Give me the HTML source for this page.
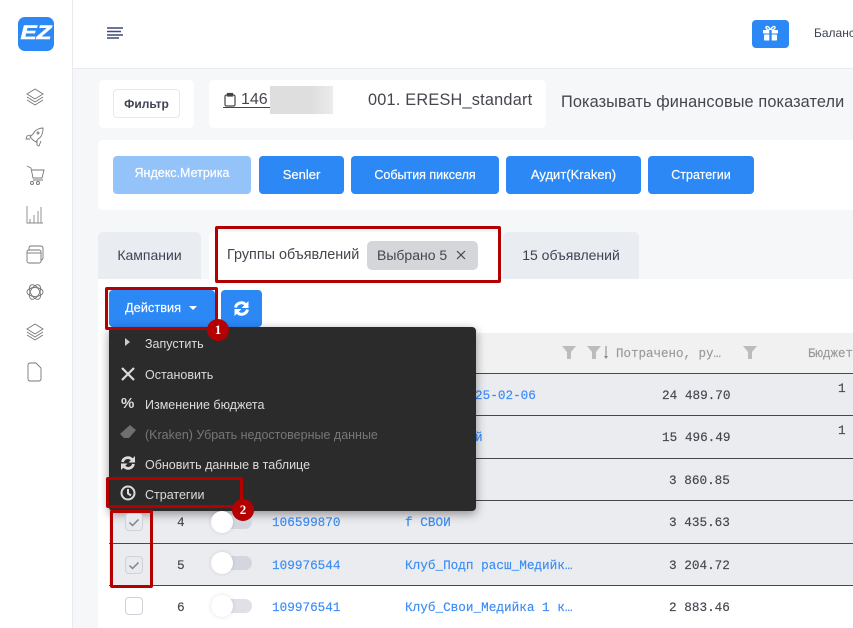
<!DOCTYPE html>
<html><head><meta charset="utf-8">
<style>
html,body{margin:0;padding:0;width:853px;height:628px;overflow:hidden;background:#f6f7f9}
body{position:relative;font-family:"Liberation Sans",sans-serif;color:#3f4254}
.a{position:absolute;box-sizing:border-box;white-space:nowrap}
.btn{position:absolute;box-sizing:border-box;background:#2b88f5;color:#fff;border-radius:4px;font-size:12.5px;text-align:center;top:156px;height:38px;line-height:38px;-webkit-text-stroke:.2px #fff}
.row{position:absolute;left:109px;width:744px;height:42px;background:#ebecf0;border-top:1px solid #46484c;box-sizing:border-box}
.m{position:absolute;font-family:"Liberation Mono",monospace;font-size:12.7px;white-space:nowrap;color:#44464e;-webkit-text-stroke:.15px currentColor}
.l{color:#3a8cf6}
.cb{position:absolute;left:125px;width:18px;height:18px;box-sizing:border-box;border:1px solid #cfd2da;border-radius:4px;background:#fff}
.cb.on{background:#e9eaee}
.tg{position:absolute;left:211px;width:41px;height:14px;background:#d3d6df;border-radius:7px}
.tg i{position:absolute;left:0;top:-4px;width:22px;height:22px;border-radius:50%;background:#fff;box-shadow:0 0 4px rgba(0,0,0,.12)}
.mi{position:absolute;left:145px;font-size:12.5px;color:#dcdcdc;white-space:nowrap}
.red{position:absolute;box-sizing:border-box;border:3px solid #b30000;border-radius:2px}
.num{position:absolute;width:22px;height:22px;border-radius:50%;background:#b30000;color:#fff;font:bold 13px/22px "Liberation Serif",serif;text-align:center}
svg{position:absolute;overflow:visible}
</style></head><body>

<!-- sidebar -->
<div class="a" style="left:0;top:0;width:73px;height:628px;background:#fff;border-right:1px solid #e8eaf0"></div>
<div class="a" style="left:18px;top:17px;width:36px;height:34px;background:#2b88f5;border-radius:7px"></div>
<div class="a" style="left:18px;top:17px;width:36px;height:34px;color:#fff;font:italic bold 19px/34px 'Liberation Sans',sans-serif;text-align:center;transform:scaleX(1.28);-webkit-text-stroke:.5px #fff">EZ</div>

<svg style="left:0;top:0" width="72" height="400" fill="none" stroke="#777" stroke-width=".9">
<path d="M35 89l8 5-8 5-8-5z"/><path d="M27 97l8 5 8-5M27 100l8 5 8-5"/>
<path d="M43 128c-4 0-8 2-10 6l-3 3 3 3 3 2 2-3c4-2 5-7 5-11z"/><path d="M31 135l-4 1-1 3 4 0M37 141l0 4 2 1 2-5"/><circle cx="38" cy="133" r="1"/>
<path d="M27 166l4 2 2 10h9l2-8H32M33 180h10"/><circle cx="32" cy="183" r="1.5"/><circle cx="38" cy="183" r="1.5"/>
<path d="M27 206v17h16M30 223v-4M34 223v-8M38 223v-12M41 223v-16" stroke="#888"/>
<rect x="27" y="250" width="14" height="13" rx="2"/><path d="M29 250v-2c0-1.500 1-2 2-2h10c1 0 2 1 2 2v10c0 1-1 2-2 2"/><path d="M27 253h14"/>
<g transform="translate(35 292)"><ellipse rx="8" ry="4.500"/><ellipse rx="8" ry="4.500" transform="rotate(60)"/><ellipse rx="8" ry="4.500" transform="rotate(120)"/></g>
<path d="M35 324l8 5-8 5-8-5z"/><path d="M27 332l8 5 8-5M27 335l8 5 8-5"/>
<path d="M30 363h6l5 5v11c0 1-1 2-2 2h-9c-1 0-2-1-2-2v-14c0-1 1-2 2-2z"/>
</svg>

<!-- header -->
<div class="a" style="left:73px;top:0;width:780px;height:69px;background:#fff;border-bottom:1px solid #e8eaf0"></div>
<svg style="left:107px;top:27px" width="16" height="12" stroke="#3f4a75" stroke-width="1.500"><path d="M0 1h16M0 4.500h14M0 8h16M0 11h12"/></svg>
<div class="a" style="left:752px;top:20px;width:37px;height:28px;background:#2b88f5;border-radius:4px"></div>
<svg style="left:763px;top:26px" width="15" height="15" fill="#fff"><rect x="0" y="4" width="15" height="3.500" rx=".8"/><rect x="1" y="8.500" width="13" height="6" rx=".8"/><path d="M7.500 4C5 4 3 3 3 1.500S5.500-.5 7.500 4zM7.500 4C10 4 12 3 12 1.500S9.500-.5 7.500 4z" fill="none" stroke="#fff" stroke-width="1.400"/><rect x="6.300" y="4" width="2.400" height="10.500" fill="#2b88f5"/></svg>
<div class="a" style="left:814px;top:26px;font-size:12px;color:#3f4254">Баланс</div>

<!-- filter cards -->
<div class="a" style="left:99px;top:80px;width:95px;height:48px;background:#fff;border-radius:5px"></div>
<div class="a" style="left:113px;top:89px;width:67px;height:29px;background:#fff;border:1px solid #e6e8ee;border-radius:4px;font-size:12px;font-weight:bold;line-height:28px;text-align:center;color:#3f4254">Фильтр</div>
<div class="a" style="left:209px;top:80px;width:337px;height:48px;background:#fff;border-radius:5px"></div>
<svg style="left:224px;top:93px" width="14" height="13" fill="none" stroke="#444" stroke-width="1.200"><rect x="1" y="2" width="10" height="11" rx="1.500"/><rect x="3.500" y="0.500" width="5" height="2.500" fill="#444"/></svg>
<div class="a" style="left:223px;top:107px;width:47px;height:1px;background:#444"></div>
<div class="a" style="left:241px;top:91px;font-size:16px;color:#44464e">146</div>
<div class="a" style="left:270px;top:86px;width:63px;height:28px;background:linear-gradient(90deg,#dedede,#dedede 65%,#ececec)"></div>
<div class="a" style="left:368px;top:91px;font-size:16.300px;letter-spacing:.22px;color:#44464e">001. ERESH_standart</div>
<div class="a" style="left:561px;top:93px;font-size:16.300px;letter-spacing:.12px;color:#44464e">Показывать финансовые показатели</div>

<!-- buttons card -->
<div class="a" style="left:98px;top:140px;width:755px;height:70px;background:#fff;border-radius:5px 0 0 5px"></div>
<div class="btn" style="left:113px;width:138px;background:#94c3fa;line-height:35px">Яндекс.Метрика</div>
<div class="btn" style="left:259px;width:85px;font-size:13px">Senler</div>
<div class="btn" style="left:351px;width:148px">События пикселя</div>
<div class="btn" style="left:506px;width:135px;font-size:13px">Аудит(Kraken)</div>
<div class="btn" style="left:648px;width:106px">Стратегии</div>

<!-- tabs -->
<div class="a" style="left:98px;top:232px;width:103px;height:47px;background:#e9ecf1;border-radius:5px 5px 0 0;font-size:14px;text-align:center;line-height:46px">Кампании</div>
<div class="a" style="left:209px;top:232px;width:290px;height:47px;background:#fff;border-radius:5px 5px 0 0"></div>
<div class="a" style="left:227px;top:247px;font-size:14.400px;color:#44464e">Группы объявлений</div>
<div class="a" style="left:367px;top:241px;width:111px;height:29px;background:#d5d6da;border-radius:5px;font-size:14px;line-height:29px;padding-left:10px;color:#44464e">Выбрано 5</div>
<svg style="left:456px;top:250px" width="10" height="10" stroke="#44464e" stroke-width="1.200"><path d="M1 1l8 8M9 1l-8 8"/></svg>
<div class="a" style="left:503px;top:232px;width:136px;height:47px;background:#e9ecf1;border-radius:5px 5px 0 0;font-size:14px;text-align:center;line-height:46px">15 объявлений</div>

<!-- main -->
<div class="a" style="left:98px;top:279px;width:755px;height:349px;background:#fff"></div>
<div class="a" style="left:109px;top:290px;width:106px;height:37px;background:#2b88f5;border-radius:4px;color:#fff;font-size:12.800px;line-height:36px;padding-left:16px;-webkit-text-stroke:.15px #fff">Действия</div>
<svg style="left:189px;top:306px" width="8" height="4" fill="#fff"><path d="M0 0h8L4 4z"/></svg>
<div class="a" style="left:221px;top:290px;width:41px;height:37px;background:#2b88f5;border-radius:4px"></div>
<svg style="left:234px;top:301px" width="15" height="15" fill="none" stroke="#fff" stroke-width="3"><path d="M1.500 6.500A6 6 0 0 1 12 4"/><path d="M13.500 8.500A6 6 0 0 1 3 11"/><path d="M14.500 0v7H7.500zM.5 15V8h7z" fill="#fff" stroke="none"/></svg>

<!-- table -->
<div class="a" style="left:109px;top:333px;width:744px;height:40px;background:#f1f1f1"></div>
<svg style="left:562px;top:346px" width="200" height="14" fill="#bcbcbc"><path d="M0 0h14L9 6v7H5V6zM25 0h14l-5 6v7h-4V6zM181 0h14l-5 6v7h-4V6z"/><path d="M44 0v12" stroke="#888" stroke-width="1"/><path d="M42 10l2 3 2-3z" fill="#888"/></svg>
<div class="m" style="left:616px;top:347px;color:#9a9a9a;font-size:12.500px">Потрачено, ру…</div>
<div class="m" style="left:808px;top:347px;color:#9a9a9a;font-size:12.500px">Бюджет</div>

<div class="row" style="top:373px"></div>
<div class="row" style="top:415px;height:43px"></div>
<div class="row" style="top:458px"></div>
<div class="row" style="top:500px;height:43px"></div>
<div class="row" style="top:543px"></div>
<div class="a" style="left:109px;top:585px;width:744px;height:43px;background:#fff;border-top:1px solid #46484c"></div>

<div class="m l" style="left:475px;top:388px">25-02-06</div>
<div class="m" style="left:662px;top:388px">24 489.70</div>
<div class="m" style="left:838px;top:381px">1</div>
<div class="m l" style="left:475px;top:430px">й</div>
<div class="m" style="left:662px;top:430px">15 496.49</div>
<div class="m" style="left:838px;top:423px">1</div>
<div class="m" style="left:669px;top:473px">3 860.85</div>

<div class="m" style="left:177px;top:515px">4</div>
<div class="m l" style="left:272px;top:515px">106599870</div>
<div class="m l" style="left:405px;top:515px">f СВОИ</div>
<div class="m" style="left:669px;top:515px">3 435.63</div>

<div class="cb on" style="top:556px"></div>
<div class="m" style="left:177px;top:558px">5</div>
<div class="tg" style="top:556px"><i></i></div>
<div class="m l" style="left:272px;top:558px">109976544</div>
<div class="m l" style="left:405px;top:558px">Клуб_Подп расш_Медийк…</div>
<div class="m" style="left:669px;top:558px">3 204.72</div>

<div class="cb" style="top:597px"></div>
<div class="m" style="left:177px;top:600px">6</div>
<div class="tg" style="top:599px;background:#dfe1e7"><i></i></div>
<div class="m l" style="left:272px;top:600px">109976541</div>
<div class="m l" style="left:405px;top:600px">Клуб_Свои_Медийка 1 к…</div>
<div class="m" style="left:669px;top:600px">2 883.46</div>

<!-- dropdown -->
<div class="a" style="left:109px;top:327px;width:367px;height:184px;background:#2b2b2b;border-radius:4px;box-shadow:0 3px 10px rgba(0,0,0,.4)"></div>
<div class="cb on" style="top:513px"></div>
<div class="tg" style="top:515px"><i></i></div>
<svg style="left:125px;top:513px" width="18" height="62" fill="none" stroke="#7d8296" stroke-width="1.500"><path d="M4.500 9.500l3 3 6-6M4.500 52.500l3 3 6-6"/></svg>
<svg style="left:125px;top:338px" width="5" height="8" fill="#ccc"><path d="M0 0l5 4-5 4z"/></svg>
<svg style="left:121px;top:367px" width="14" height="14" stroke="#dcdcdc" stroke-width="2.200"><path d="M1 1l12 12M13 1L1 13"/></svg>
<div class="a" style="left:121px;top:395px;font-size:15px;font-weight:bold;color:#dcdcdc;line-height:18px">%</div>
<svg style="left:120px;top:425px" width="16" height="14" fill="#6f6f6f"><path d="M10 0l6 5-7 8H4l-4-4z"/></svg>
<svg style="left:121px;top:456px" width="14" height="14" fill="none" stroke="#dcdcdc" stroke-width="2.800"><path d="M1.500 6A5.500 5.500 0 0 1 11 3.500"/><path d="M12.500 8A5.500 5.500 0 0 1 3 10.500"/><path d="M14 0v6.500H7.500zM0 14V7.500h6.500z" fill="#dcdcdc" stroke="none"/></svg>
<svg style="left:120px;top:485px" width="16" height="16" fill="none" stroke="#dcdcdc" stroke-width="2"><circle cx="8" cy="8" r="6.500"/><path d="M8 4v4.500l3 2"/></svg>
<div class="mi" style="top:337px">Запустить</div>
<div class="mi" style="top:368px">Остановить</div>
<div class="mi" style="top:398px">Изменение бюджета</div>
<div class="mi" style="top:428px;color:#777">(Kraken) Убрать недостоверные данные</div>
<div class="mi" style="top:458px">Обновить данные в таблице</div>
<div class="mi" style="top:488px">Стратегии</div>

<!-- annotations -->
<div class="red" style="left:215px;top:226px;width:286px;height:57px"></div>
<div class="red" style="left:105px;top:287px;width:113px;height:43px"></div>
<div class="num" style="left:207px;top:319px">1</div>
<div class="red" style="left:106px;top:477px;width:137px;height:31px"></div>
<div class="red" style="left:110px;top:510px;width:43px;height:78px"></div>
<div class="num" style="left:232px;top:499px">2</div>
</body></html>
